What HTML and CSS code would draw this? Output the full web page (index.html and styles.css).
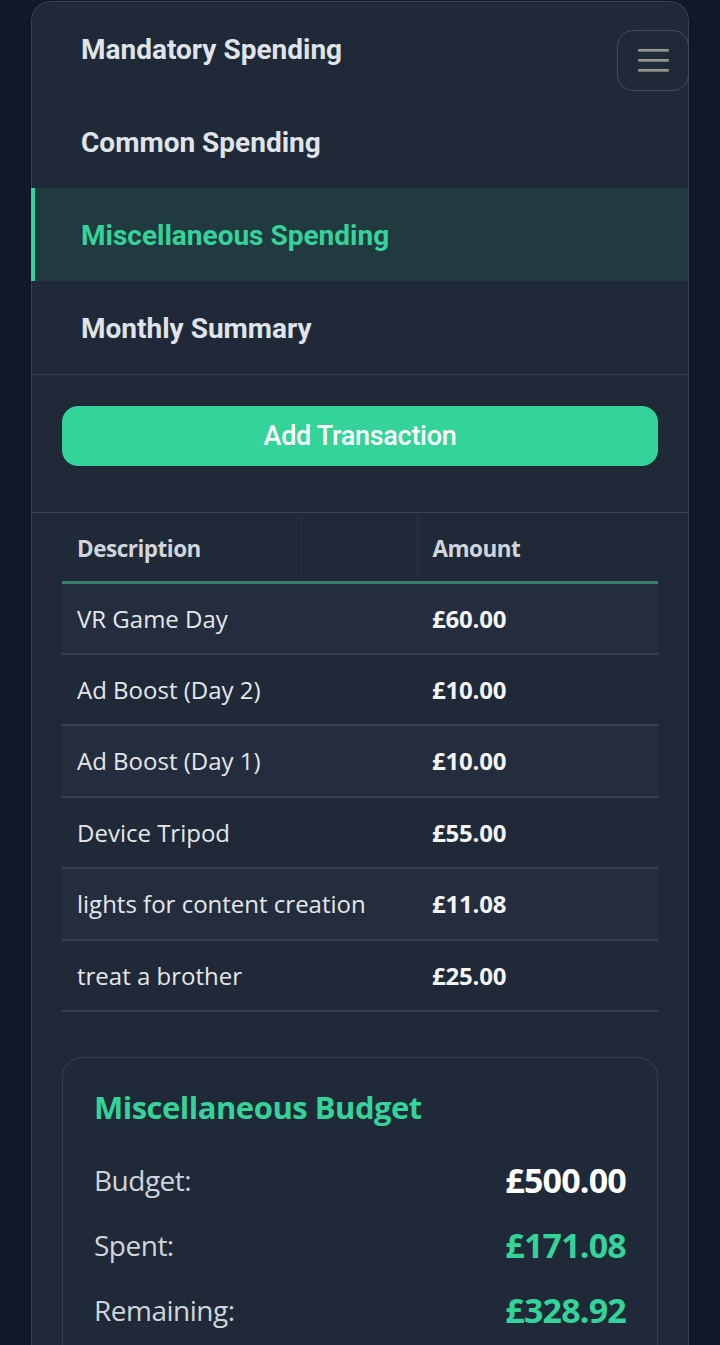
FILE: index.html
```html
<!DOCTYPE html>
<html lang="en">
<head>
<meta charset="utf-8">
<title>Miscellaneous Spending</title>
<link rel="stylesheet" href="styles.css">
</head>
<body>
<div class="card">
  <nav class="nav">
    <a class="nav-item">Mandatory Spending</a>
    <a class="nav-item">Common Spending</a>
    <a class="nav-item active">Miscellaneous Spending</a>
    <a class="nav-item">Monthly Summary</a>
  </nav>
  <button class="menu-btn" aria-label="Menu">
    <span class="bar"></span><span class="bar"></span><span class="bar"></span>
  </button>
  <div class="actions">
    <button class="add-btn">Add Transaction</button>
  </div>
  <div class="table-wrap">
    <table class="tx">
      <thead>
        <tr><th class="c-desc">Description</th><th class="c-mid"></th><th class="c-amt">Amount</th></tr>
      </thead>
      <tbody>
        <tr><td>VR Game Day</td><td></td><td class="amt">£60.00</td></tr>
        <tr><td>Ad Boost (Day 2)</td><td></td><td class="amt">£10.00</td></tr>
        <tr><td>Ad Boost (Day 1)</td><td></td><td class="amt">£10.00</td></tr>
        <tr><td>Device Tripod</td><td></td><td class="amt">£55.00</td></tr>
        <tr><td>lights for content creation</td><td></td><td class="amt">£11.08</td></tr>
        <tr><td>treat a brother</td><td></td><td class="amt">£25.00</td></tr>
      </tbody>
    </table>
    <section class="budget">
      <h2 class="budget-title">Miscellaneous Budget</h2>
      <div class="b-row"><span class="b-label">Budget:</span><span class="b-val">£500.00</span></div>
      <div class="b-row"><span class="b-label">Spent:</span><span class="b-val green">£171.08</span></div>
      <div class="b-row"><span class="b-label">Remaining:</span><span class="b-val green">£328.92</span></div>
    </section>
  </div>
</div>
</body>
</html>
```

FILE: styles.css
```css
* { box-sizing: border-box; }
html, body { margin: 0; padding: 0; }
body {
  background: #111827;
  font-family: "Open Sans", "Noto Sans", sans-serif;
  color: #e5e7eb;
}
.card {
  position: relative;
  margin: 1px 31px 0 31px;
  background: #1f2937;
  border: 1px solid #374151;
  border-bottom: none;
  border-radius: 20px 20px 0 0;
  min-height: 1344px;
}
.nav {
  display: flex;
  flex-direction: column;
  border-bottom: 1px solid #374151;
}
.nav-item {
  display: flex;
  align-items: center;
  height: 93px;
  padding-left: 46px;
  padding-top: 2px;
  font-family: Roboto, sans-serif;
  font-weight: 700;
  font-size: 28px;
  color: #dfe3ea;
  border-left: 4px solid transparent;
  margin-left: -1px;
}
.nav-item.active {
  background: #213a40;
  border-left-color: #34d399;
  color: #34d399;
}
.menu-btn {
  position: absolute;
  top: 28px;
  right: -1px;
  width: 72px;
  height: 61px;
  border: 1px solid #414b5b;
  border-radius: 16px;
  background: #1f2937;
  display: flex;
  flex-direction: column;
  align-items: center;
  justify-content: center;
  gap: 7px;
  padding: 0;
}
.menu-btn .bar {
  display: block;
  width: 31px;
  height: 3px;
  border-radius: 1px;
  background: linear-gradient(#a8a89f, #6b7068);
}
.actions {
  padding: 31px 30px 46px 30px;
  border-bottom: 1px solid #374151;
}
.add-btn {
  display: block;
  width: 100%;
  height: 60px;
  border: none;
  border-radius: 16px;
  background: #34d399;
  color: #ffffff;
  font-family: Roboto, sans-serif;
  font-weight: 500;
  font-size: 27px;
  letter-spacing: -0.3px;
}
.table-wrap {
  padding: 0 30px;
}
.tx {
  width: 100%;
  border-collapse: collapse;
  table-layout: fixed;
}
.tx th {
  height: 69px;
  text-align: left;
  padding: 4px 15px 0 15px;
  font-weight: 700;
  font-size: 22.5px;
  color: #d1d5db;
  border-bottom: 3px solid #367d6c;
  border-right: 1px solid #263142;
  letter-spacing: -0.5px;
}
.tx th.c-desc { width: 239px; }
.tx th.c-mid { width: 116px; }
.tx th:last-child { border-right: none; }
.tx td {
  height: 71.5px;
  padding: 0 15px;
  font-size: 24px;
  color: #e5e7eb;
  border-bottom: 2px solid #364152;
  white-space: nowrap;
  overflow: visible;
}
.tx tbody tr:nth-child(odd) td { background: #232d3d; }
.tx td.amt {
  font-weight: 700;
  color: #f3f4f6;
  letter-spacing: -0.2px;
}
.budget {
  margin-top: 45px;
  border: 1px solid #374151;
  border-radius: 20px;
  padding: 28px 31px 20px 31px;
}
.budget-title {
  margin: 0 0 19px 0;
  font-size: 31px;
  font-weight: 700;
  color: #34d399;
  letter-spacing: -0.5px;
}
.b-row {
  display: flex;
  justify-content: space-between;
  align-items: center;
  height: 65px;
}
.b-label {
  font-size: 28px;
  color: #d1d5db;
  letter-spacing: -0.5px;
}
.b-val {
  font-size: 34px;
  font-weight: 700;
  color: #ffffff;
  letter-spacing: -0.8px;
}
.b-val.green { color: #34d399; }
```
